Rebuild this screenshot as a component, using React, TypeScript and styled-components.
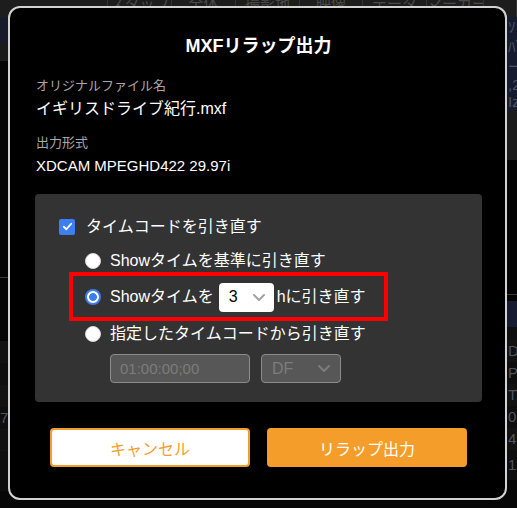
import styled, { createGlobalStyle } from 'styled-components';

const GlobalStyle = createGlobalStyle`
  html, body {
    margin: 0;
    padding: 0;
    background: #070707;
  }
  * {
    box-sizing: border-box;
  }
`;

const fontStack = `"Liberation Sans", "Noto Sans CJK JP", sans-serif`;

const leftBlocks = [
  { h: 27, bg: '#161a2c' },
  { h: 17, bg: '#1b1b1b' },
  { h: 216, bg: '#040404' },
  { h: 1, bg: '#3a3a3a' },
  { h: 63, bg: '#040404' },
  { h: 22, bg: '#121212' },
  { h: 22, bg: '#0e0e0e' },
  { h: 22, bg: '#121212' },
  { h: 22, bg: '#0e0e0e', text: '7' },
  { h: 22, bg: '#121212' },
  { h: 40, bg: '#0e0e0e' },
];

const rightBlocks = [
  { h: 20, bg: '#171b30', text: 'ｿ' },
  { h: 20, bg: '#171b30', text: 'ﾊﾞ' },
  { h: 20, bg: '#171b30', text: 'ー' },
  { h: 16, bg: '#171b30', text: ',2' },
  { h: 17, bg: '#171b30', text: 'Iz' },
  { h: 50, bg: '#1b1b1b' },
  { h: 134, bg: '#040404' },
  { h: 1, bg: '#3a3a3a' },
  { h: 6, bg: '#040404' },
  { h: 26, bg: '#181c33' },
  { h: 13, bg: '#0f0f0f' },
  { h: 22, bg: '#121212', text: 'D' },
  { h: 22, bg: '#0e0e0e', text: 'P' },
  { h: 22, bg: '#121212', text: 'T.' },
  { h: 22, bg: '#0e0e0e', text: '0.(' },
  { h: 22, bg: '#121212', text: '4.' },
  { h: 30, bg: '#0e0e0e', text: '15' },
];

const tabs = ['', 'スタッフ', '全体', '撮影地', '映像', 'データ', 'マーカー', ''];

const App = () => {
  return (
    <>
      <GlobalStyle />
      <Screen>
        <Backdrop>
          <TabBar>
            {tabs.map((t, i) => (
              <Tab key={i}>{t}</Tab>
            ))}
          </TabBar>
          <Columns>
            <Column>
              {leftBlocks.map((b, i) => (
                <Block key={i} $h={b.h} $bg={b.bg}>
                  {b.text}
                </Block>
              ))}
            </Column>
            <Column>
              {rightBlocks.map((b, i) => (
                <Block key={i} $h={b.h} $bg={b.bg} $alignRight>
                  {b.text}
                </Block>
              ))}
            </Column>
          </Columns>
        </Backdrop>

        <Dialog>
          <Title>MXFリラップ出力</Title>

          <Field>
            <FieldLabel>オリジナルファイル名</FieldLabel>
            <FieldValue>イギリスドライブ紀行.mxf</FieldValue>
          </Field>
          <Field>
            <FieldLabel>出力形式</FieldLabel>
            <FieldValue $latin>XDCAM MPEGHD422 29.97i</FieldValue>
          </Field>

          <Panel>
            <CheckRow>
              <CheckBox>
                <svg width="11" height="11" viewBox="0 0 12 12">
                  <path
                    d="M2 6.3 L4.8 9 L10 3"
                    fill="none"
                    stroke="#fff"
                    strokeWidth="2"
                    strokeLinecap="round"
                    strokeLinejoin="round"
                  />
                </svg>
              </CheckBox>
              <OptionText>タイムコードを引き直す</OptionText>
            </CheckRow>

            <RadioRow $h={23} $top={15}>
              <Radio />
              <OptionText>Showタイムを基準に引き直す</OptionText>
            </RadioRow>

            <Highlight>
              <Radio $checked />
              <OptionText>Showタイムを</OptionText>
              <HourSelect>
                <span>3</span>
                <Chevron />
              </HourSelect>
              <OptionText>hに引き直す</OptionText>
            </Highlight>

            <RadioRow $h={26} $top={0}>
              <Radio />
              <OptionText>指定したタイムコードから引き直す</OptionText>
            </RadioRow>

            <InputRow>
              <TimecodeInput>01:00:00;00</TimecodeInput>
              <ModeSelect>
                <span>DF</span>
                <Chevron $dim />
              </ModeSelect>
            </InputRow>
          </Panel>

          <Buttons>
            <Button $variant="outline">キャンセル</Button>
            <Button $variant="primary">リラップ出力</Button>
          </Buttons>
        </Dialog>
      </Screen>
    </>
  );
};

export default App;

const Chevron = ({ $dim }: { $dim?: boolean }) => (
  <svg width="14" height="9" viewBox="0 0 14 9">
    <path
      d="M2 2 L7 7 L12 2"
      fill="none"
      stroke={$dim ? '#7c7c7c' : '#a3a3a3'}
      strokeWidth="2"
      strokeLinecap="round"
      strokeLinejoin="round"
    />
  </svg>
);

const Screen = styled.div`
  position: relative;
  width: 517px;
  height: 508px;
  overflow: hidden;
  font-family: ${fontStack};
  background: #070707;
`;

const Backdrop = styled.div`
  display: flex;
  flex-direction: column;
  height: 100%;
`;

const TabBar = styled.div`
  display: grid;
  grid-template-columns: 108px 64px 64px 64px 63px 64px 57px 33px;
  height: 17px;
  background: #1d1d1d;
  overflow: hidden;
`;

const Tab = styled.div`
  border-right: 1px solid #333;
  color: #4a4a4a;
  font-size: 15px;
  line-height: 15px;
  margin-top: -4px;
  text-align: center;
  white-space: nowrap;
  overflow: hidden;
`;

const Columns = styled.div`
  display: grid;
  grid-template-columns: 258px 259px;
  flex: 1;
`;

const Column = styled.div`
  display: flex;
  flex-direction: column;
`;

const Block = styled.div<{ $h: number; $bg: string; $alignRight?: boolean }>`
  height: ${(p) => p.$h}px;
  flex-shrink: 0;
  background: ${(p) => p.$bg};
  color: #4f5563;
  font-size: 15px;
  line-height: ${(p) => p.$h}px;
  padding: 0 ${(p) => (p.$alignRight ? '0 0 250px' : '0')};
  white-space: nowrap;
  overflow: hidden;
`;

const Dialog = styled.div`
  position: absolute;
  left: 8px;
  top: 6px;
  width: 499px;
  height: 494px;
  background: #000;
  border: 2px solid #d2d2d2;
  border-radius: 12px;
  padding: 26px 23px 0 25px;
  display: flex;
  flex-direction: column;
  color: #fff;
`;

const Title = styled.h2`
  margin: 0 0 19px;
  font-size: 18px;
  font-weight: bold;
  line-height: 24px;
  text-align: center;
`;

const Field = styled.div`
  display: flex;
  flex-direction: column;
  padding-left: 1px;
  margin-bottom: 13px;
`;

const FieldLabel = styled.div`
  color: #a8a8a8;
  font-size: 13px;
  line-height: 18px;
`;

const FieldValue = styled.div<{ $latin?: boolean }>`
  color: #fff;
  margin-top: 2px;
  font-size: ${(p) => (p.$latin ? '15px' : '16px')};
  line-height: 24px;
`;

const Panel = styled.div`
  margin-top: 3px;
  background: #333;
  border-radius: 4px;
  height: 208px;
  padding: 25px 24px 0;
  display: flex;
  flex-direction: column;
  align-items: flex-start;
`;

const CheckRow = styled.div`
  display: flex;
  align-items: center;
  gap: 11px;
  height: 15px;
`;

const CheckBox = styled.span`
  width: 16px;
  height: 16px;
  border-radius: 2px;
  background: #3d7ff0;
  display: flex;
  align-items: center;
  justify-content: center;
`;

const OptionText = styled.span`
  color: #fff;
  font-size: 16px;
  line-height: 20px;
  white-space: nowrap;
`;

const RadioRow = styled.div<{ $h: number; $top: number }>`
  display: flex;
  align-items: center;
  gap: 9px;
  height: ${(p) => p.$h}px;
  margin-left: 26px;
  margin-top: ${(p) => p.$top}px;
`;

const Radio = styled.span<{ $checked?: boolean }>`
  width: 16px;
  height: 16px;
  border-radius: 50%;
  flex-shrink: 0;
  background: ${(p) =>
    p.$checked
      ? 'radial-gradient(circle, #3d7ff0 0 3.6px, #fff 4.2px)'
      : '#fff'};
  border: ${(p) => (p.$checked ? '2px solid #3d7ff0' : '1px solid #d9d9d9')};
`;

const Highlight = styled.div`
  display: flex;
  align-items: center;
  gap: 9px;
  width: 319px;
  height: 49px;
  margin-left: 10px;
  padding-left: 12px;
  border: 4px solid #ff0000;
`;

const SelectBase = styled.div`
  display: flex;
  align-items: center;
  justify-content: space-between;
  height: 29px;
  border-radius: 4px;
  font-size: 16px;
`;

const HourSelect = styled(SelectBase)`
  width: 55px;
  margin: 1px -6px 0 -4px;
  padding: 0 8px 0 10px;
  background: #fff;
  color: #000;
`;

const InputRow = styled.div`
  display: flex;
  gap: 11px;
  margin: 7px 0 0 51px;
`;

const TimecodeInput = styled.div`
  width: 140px;
  height: 29px;
  border: 1px solid #8c8c8c;
  border-radius: 4px;
  background: #575757;
  color: #7c7c7c;
  font-size: 15px;
  line-height: 27px;
  padding-left: 9px;
`;

const ModeSelect = styled(SelectBase)`
  width: 80px;
  padding: 0 9px 0 10px;
  border: 1px solid #8c8c8c;
  background: #575757;
  color: #7c7c7c;
`;

const Buttons = styled.div`
  display: flex;
  justify-content: center;
  gap: 17px;
  margin-top: 26px;
`;

const Button = styled.button<{ $variant: 'outline' | 'primary' }>`
  width: 200px;
  height: 39px;
  border-radius: 4px;
  font-family: ${fontStack};
  font-size: 16px;
  cursor: pointer;
  border: 2px solid #f59d2a;
  background: ${(p) => (p.$variant === 'primary' ? '#f59d2a' : '#fff')};
  color: ${(p) => (p.$variant === 'primary' ? '#fff' : '#f59d2a')};
`;
